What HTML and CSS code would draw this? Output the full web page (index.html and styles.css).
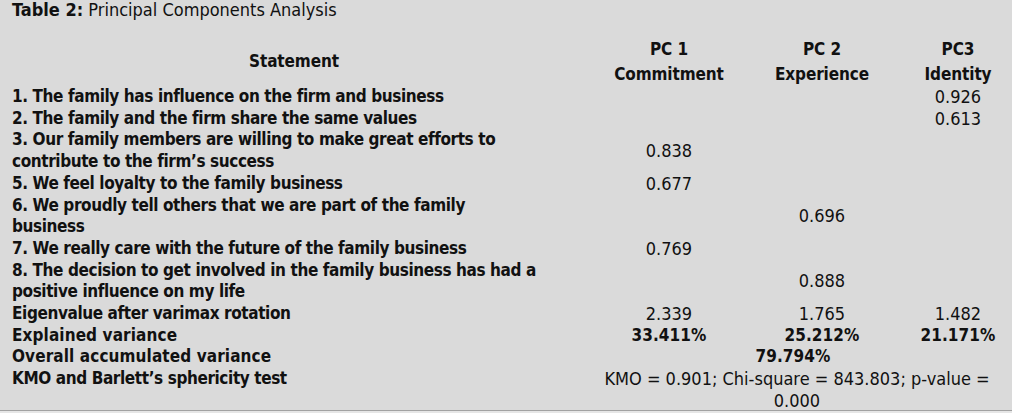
FILE: index.html
```html
<!DOCTYPE html>
<html lang="en">
<head>
<meta charset="utf-8">
<title>Table 2: Principal Components Analysis</title>
<link rel="stylesheet" href="styles.css">
</head>
<body>
<div class="page">
  <p class="caption"><b>Table 2:</b> Principal Components Analysis</p>
  <table class="pca">
    <colgroup>
      <col class="c-stmt">
      <col class="c-pc1">
      <col class="c-pc2">
      <col class="c-pc3">
    </colgroup>
    <thead>
      <tr>
        <th class="stmt-head">Statement</th>
        <th>PC 1<br>Commitment</th>
        <th>PC 2<br>Experience</th>
        <th class="pc3">PC3<br>Identity</th>
      </tr>
    </thead>
    <tbody>
      <tr><td class="stmt">1. The family has influence on the firm and business</td><td></td><td></td><td class="pc3">0.926</td></tr>
      <tr><td class="stmt">2. The family and the firm share the same values</td><td></td><td></td><td class="pc3">0.613</td></tr>
      <tr><td class="stmt">3. Our family members are willing to make great efforts to<br>contribute to the firm’s success</td><td>0.838</td><td></td><td class="pc3"></td></tr>
      <tr><td class="stmt">5. We feel loyalty to the family business</td><td>0.677</td><td></td><td class="pc3"></td></tr>
      <tr><td class="stmt">6. We proudly tell others that we are part of the family<br>business</td><td></td><td>0.696</td><td class="pc3"></td></tr>
      <tr><td class="stmt">7. We really care with the future of the family business</td><td>0.769</td><td></td><td class="pc3"></td></tr>
      <tr><td class="stmt">8. The decision to get involved in the family business has had a<br>positive influence on my life</td><td></td><td>0.888</td><td class="pc3"></td></tr>
      <tr><td class="stmt">Eigenvalue after varimax rotation</td><td>2.339</td><td>1.765</td><td class="pc3">1.482</td></tr>
      <tr class="strong"><td class="stmt">Explained variance</td><td>33.411%</td><td>25.212%</td><td class="pc3">21.171%</td></tr>
      <tr class="strong"><td class="stmt">Overall accumulated variance</td><td colspan="3">79.794%</td></tr>
      <tr><td class="stmt top">KMO and Barlett’s sphericity test</td><td colspan="3" class="kmo">KMO = 0.901; Chi-square = 843.803; p-value =<br>0.000</td></tr>
    </tbody>
  </table>
</div>
</body>
</html>
```

FILE: styles.css
```css
html, body {
  margin: 0;
  padding: 0;
  background: #e6e6e6;
}

body {
  width: 1012px;
  height: 413px;
  overflow: hidden;
  font-family: "DejaVu Sans Condensed", "DejaVu Sans", sans-serif;
  font-stretch: condensed;
  color: #111;
}

.page {
  box-sizing: border-box;
  width: 1012px;
  height: 411px;
  padding: 0 2px 0 12px;
  background: #dadada;
  border-bottom: 1px solid #a2a2a2;
}

.caption {
  margin: 0 0 16px;
  font-size: 18px;
  line-height: 20px;
}

.caption b {
  font-weight: bold;
}

.pca {
  border-collapse: collapse;
  table-layout: fixed;
  width: 998px;
  font-size: 18px;
}

.c-stmt { width: 564px; }
.c-pc1 { width: 186px; }
.c-pc2 { width: 120px; }
.c-pc3 { width: 128px; }

.pca th,
.pca td {
  padding: 0;
  vertical-align: middle;
  text-align: center;
  white-space: nowrap;
}

.pca th {
  font-size: 17px;
  font-weight: bold;
  line-height: 24.5px;
  padding-top: 1px;
  letter-spacing: -0.1px;
}

.pca td {
  line-height: 21.7px;
}

.pca td.stmt {
  text-align: left;
  font-size: 17px;
  font-weight: bold;
  letter-spacing: -0.4px;
}

.pca td.top {
  vertical-align: top;
}

.pca .pc3 {
  padding-left: 24px;
}

.pca tr.strong td {
  font-size: 17px;
  font-weight: bold;
  letter-spacing: 0.1px;
}

.pca td.kmo {
  padding: 0 6px 0 14px;
}
```
